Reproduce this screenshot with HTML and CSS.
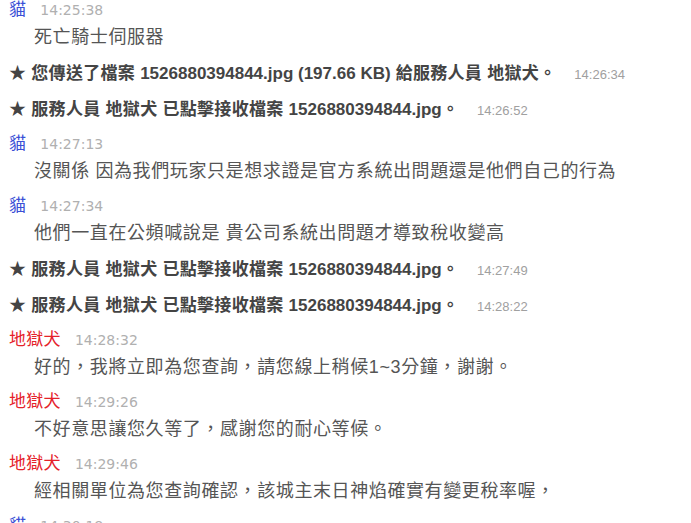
FILE: index.html
```html
<!DOCTYPE html>
<html lang="zh-Hant">
<head>
<meta charset="utf-8">
<title>Chat</title>
<link rel="stylesheet" href="styles.css">
</head>
<body>
<div class="chat">
  <div class="entry">
    <div class="head"><span class="name cat">貓</span><span class="time">14:25:38</span></div>
    <div class="msg">死亡騎士伺服器</div>
  </div>
  <div class="sysgroup">
    <div class="sys">★ 您傳送了檔案 <span class="file">1526880394844.jpg (197.66 KB)</span> 給服務人員 地獄犬。<span class="stime">14:26:34</span></div>
    <div class="sys">★ 服務人員 地獄犬 已點擊接收檔案 <span class="file">1526880394844.jpg</span>。<span class="stime">14:26:52</span></div>
  </div>
  <div class="entry">
    <div class="head"><span class="name cat">貓</span><span class="time">14:27:13</span></div>
    <div class="msg">沒關係 因為我們玩家只是想求證是官方系統出問題還是他們自己的行為</div>
  </div>
  <div class="entry">
    <div class="head"><span class="name cat">貓</span><span class="time">14:27:34</span></div>
    <div class="msg">他們一直在公頻喊說是 貴公司系統出問題才導致稅收變高</div>
  </div>
  <div class="sysgroup">
    <div class="sys">★ 服務人員 地獄犬 已點擊接收檔案 <span class="file">1526880394844.jpg</span>。<span class="stime">14:27:49</span></div>
    <div class="sys">★ 服務人員 地獄犬 已點擊接收檔案 <span class="file">1526880394844.jpg</span>。<span class="stime">14:28:22</span></div>
  </div>
  <div class="entry">
    <div class="head"><span class="name dog">地獄犬</span><span class="time">14:28:32</span></div>
    <div class="msg">好的，我將立即為您查詢，請您線上稍候1~3分鐘，謝謝。</div>
  </div>
  <div class="entry">
    <div class="head"><span class="name dog">地獄犬</span><span class="time">14:29:26</span></div>
    <div class="msg">不好意思讓您久等了，感謝您的耐心等候。</div>
  </div>
  <div class="entry">
    <div class="head"><span class="name dog">地獄犬</span><span class="time">14:29:46</span></div>
    <div class="msg">經相關單位為您查詢確認，該城主末日神焰確實有變更稅率喔，</div>
  </div>
  <div class="entry">
    <div class="head"><span class="name cat">貓</span><span class="time">14:30:18</span></div>
  </div>
</div>
</body>
</html>
```

FILE: styles.css
```css
html, body {
  margin: 0;
  padding: 0;
  background: #ffffff;
  overflow: hidden;
}

body {
  font-family: "Liberation Sans", "Noto Sans CJK TC", sans-serif;
  color: #555555;
}

.chat {
  padding: 0 0 0 9px;
}

.entry {
  margin-bottom: 13px;
}

.head {
  display: flex;
  align-items: baseline;
  gap: 14px;
  height: 20px;
  line-height: 20px;
  white-space: nowrap;
}

.name {
  font-size: 17px;
  letter-spacing: 0.3px;
}

.cat {
  color: #3a4fd6;
}

.dog {
  color: #e5222a;
}

.time {
  font-family: "DejaVu Sans", sans-serif;
  font-size: 14px;
  color: #b0b0b0;
}

.msg {
  margin-top: 5px;
  padding-left: 25px;
  font-size: 18px;
  line-height: 24px;
  letter-spacing: 0.6px;
  color: #555555;
  white-space: nowrap;
}

.sysgroup {
  margin: 4px 0 7px;
}

.sys {
  font-size: 17px;
  font-weight: bold;
  line-height: 24px;
  letter-spacing: 0.3px;
  margin-bottom: 11px;
  color: #444444;
  white-space: nowrap;
}

.file {
  font-weight: bold;
  letter-spacing: 0;
}

.stime {
  font-family: "Liberation Sans", sans-serif;
  font-weight: normal;
  font-size: 13px;
  letter-spacing: 0;
  color: #a0a0a0;
  margin-left: 18px;
}
```
